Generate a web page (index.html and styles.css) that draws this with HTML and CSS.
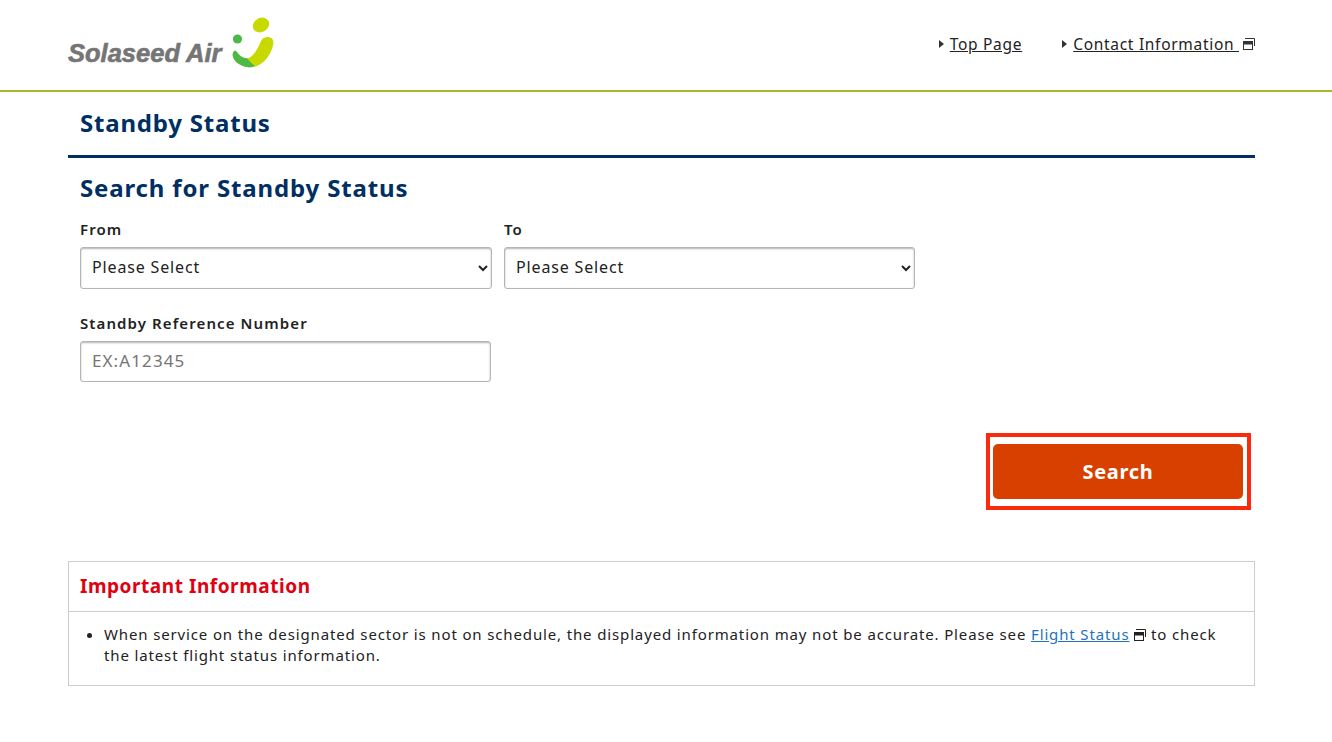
FILE: index.html
```html
<!DOCTYPE html>
<html lang="en">
<head>
    <meta charset="UTF-8">
    <meta name="viewport" content="width=device-width, initial-scale=1.0">
    <title>Standby Status</title>
    <link rel="stylesheet" href="styles.css">
</head>
<body>

<header class="site-header">
    <div class="header-inner">
        <a class="logo" href="#">
            <span class="logo-text">Solaseed Air</span>
            <svg class="logo-mark" width="46" height="54" viewBox="0 0 46 54">
                <circle cx="7.500" cy="24" r="4.600" fill="#4cb848"/>
                <ellipse cx="31" cy="10" rx="8.500" ry="7" transform="rotate(-30 31 10)" fill="#c8d900"/>
                <path d="M6 36 C10 41 13 43.500 17 43.300 C22 43 27 36 31 26 C33 22 40 20 43 25 C45 31 38 44 32 48 C27 52 20 53 17 52 C10 51 3 46 2.700 40 C2.500 37 4.500 35 6 36 Z" fill="#c8d900"/>
                <path d="M6 36 C10 41 13 43.500 17 43.300 C19 46 22 49 25 51 C22 52.500 19 52.500 17 52 C10 51 3 46 2.700 40 C2.500 37 4.500 35 6 36 Z" fill="#4cb848"/>
            </svg>
        </a>
        <nav class="header-nav">
            <a class="nav-link" href="#"><span class="arrow"></span><span class="nav-text">Top Page</span></a>
            <a class="nav-link" href="#"><span class="arrow"></span><span class="nav-text">Contact Information&nbsp;</span>
                <svg class="window-icon nav-icon" width="12" height="12" viewBox="0 0 12 12">
                    <path d="M2 .5h9.500v7.500" fill="none" stroke="#333"/>
                    <rect x=".5" y="3.500" width="9" height="8" fill="#fff" stroke="#333"/>
                    <rect x="0" y="3" width="10" height="3.500" fill="#333"/>
                </svg>
            </a>
        </nav>
    </div>
</header>

<main class="content">
    <h1 class="page-title">Standby Status</h1>

    <section class="search">
        <h2 class="search-title">Search for Standby Status</h2>
        <div class="field-row">
            <div class="field">
                <label for="from">From</label>
                <select id="from" class="select-from"><option>Please Select</option></select>
            </div>
            <div class="field">
                <label for="to">To</label>
                <select id="to" class="select-to"><option>Please Select</option></select>
            </div>
        </div>
        <div class="field field-ref">
            <label for="ref">Standby Reference Number</label>
            <input id="ref" type="text" placeholder="EX:A12345">
        </div>
        <div class="actions">
            <div class="highlight">
                <button type="button" class="search-btn">Search</button>
            </div>
        </div>
    </section>

    <section class="notice">
        <h3 class="notice-title">Important Information</h3>
        <ul class="notice-list">
            <li>When service on the designated sector is not on schedule, the displayed information may not be accurate. Please see <a href="#">Flight Status</a>
                <svg class="window-icon" width="12" height="12" viewBox="0 0 12 12">
                    <path d="M2 .5h9.500v7.500" fill="none" stroke="#222"/>
                    <rect x=".5" y="3.500" width="9" height="8" fill="#fff" stroke="#222"/>
                    <rect x="0" y="3" width="10" height="3.500" fill="#222"/>
                </svg>
                to check the latest flight status information.</li>
        </ul>
    </section>
</main>

</body>
</html>
```

FILE: styles.css
```css
body {
    margin: 0;
    font-family: "Noto Sans", Verdana, sans-serif;
    font-size: 15px;
    letter-spacing: 0.86px;
    color: #222;
    background: #fff;
}
a {
    color: inherit;
}
.site-header {
    height: 90px;
    border-bottom: 2px solid #a5b92f;
}
.header-inner {
    width: 1187px;
    height: 90px;
    margin-left: 68px;
    display: flex;
    justify-content: space-between;
    align-items: center;
}
.logo {
    display: flex;
    align-items: flex-end;
    text-decoration: none;
    margin-top: -6px;
}
.logo-text {
    font-family: "Liberation Sans", Arial, sans-serif;
    font-weight: bold;
    font-style: italic;
    font-size: 25.500px;
    letter-spacing: 0;
    color: #757575;
    -webkit-text-stroke: 0.6px #757575;
    line-height: 30px;
    margin-bottom: 1px;
}
.logo-mark {
    margin-left: 8px;
}
.header-nav {
    display: flex;
    gap: 40px;
    font-size: 15.500px;
    letter-spacing: 0.7px;
    margin-top: -2px;
}
.nav-link {
    display: flex;
    align-items: center;
    text-decoration: none;
    color: #222;
}
.nav-text {
    text-decoration: underline;
}
.arrow {
    width: 0;
    height: 0;
    margin-right: 6px;
    border-left: 5px solid #333;
    border-top: 4px solid transparent;
    border-bottom: 4px solid transparent;
}
.nav-icon {
    margin-left: 4px;
}
.window-icon {
    vertical-align: -1px;
}
.content {
    width: 1187px;
    margin-left: 68px;
}
.page-title {
    margin: 0;
    padding: 0 12px;
    height: 63px;
    line-height: 62px;
    font-size: 24px;
    font-weight: 700;
    letter-spacing: 0.8px;
    color: #002f63;
    border-bottom: 3px solid #002f63;
    box-sizing: content-box;
}
.search {
    padding: 0 12px;
}
.search-title {
    margin: 15px 0 17px;
    font-size: 24px;
    line-height: 30px;
    font-weight: 700;
    letter-spacing: 0.85px;
    color: #002f63;
}
.field-row {
    display: flex;
    gap: 12px;
}
.field label {
    display: block;
    font-size: 15px;
    font-weight: 600;
    letter-spacing: 1.1px;
    line-height: 18px;
    margin-bottom: 9px;
}
.field select,
.field input {
    display: block;
    box-sizing: border-box;
    height: 42px;
    font-family: inherit;
    font-size: 16px;
    letter-spacing: 0.85px;
    color: #222;
    background: #fff;
    border: 1px solid #b5b5b5;
    border-radius: 3px;
    box-shadow: inset 0 1px 2px rgba(0, 0, 0, 0.3);
    padding: 0 7px 2px;
}
.select-from {
    width: 412px;
}
.select-to {
    width: 411px;
}
.field input {
    width: 411px;
    height: 41px;
    padding: 0 11px 2px;
    font-size: 17px;
    letter-spacing: 1.1px;
}
.field input::placeholder {
    color: #757575;
}
.field-ref {
    margin-top: 25px;
}
.actions {
    display: flex;
    justify-content: flex-end;
    margin: 51px -8px 0 0;
}
.highlight {
    border: 4px solid #fb2a0c;
    padding: 7px 4px 7px 3px;
}
.search-btn {
    display: block;
    width: 250px;
    height: 55px;
    border: none;
    border-radius: 5px;
    background: #d84000;
    color: #fff;
    font-family: inherit;
    font-size: 20px;
    font-weight: 700;
    letter-spacing: 0.7px;
}
.notice {
    margin-top: 51px;
    border: 1px solid #ccc;
}
.notice-title {
    margin: 0;
    padding: 0 11px;
    height: 49px;
    line-height: 48px;
    font-size: 19px;
    font-weight: 700;
    letter-spacing: 0.55px;
    color: #e0000f;
    border-bottom: 1px solid #ccc;
}
.notice-list {
    margin: 0;
    padding: 12px 20px 19px 35px;
    font-size: 15px;
    line-height: 21px;
}
.notice-list a {
    color: #1f72bd;
}
```
